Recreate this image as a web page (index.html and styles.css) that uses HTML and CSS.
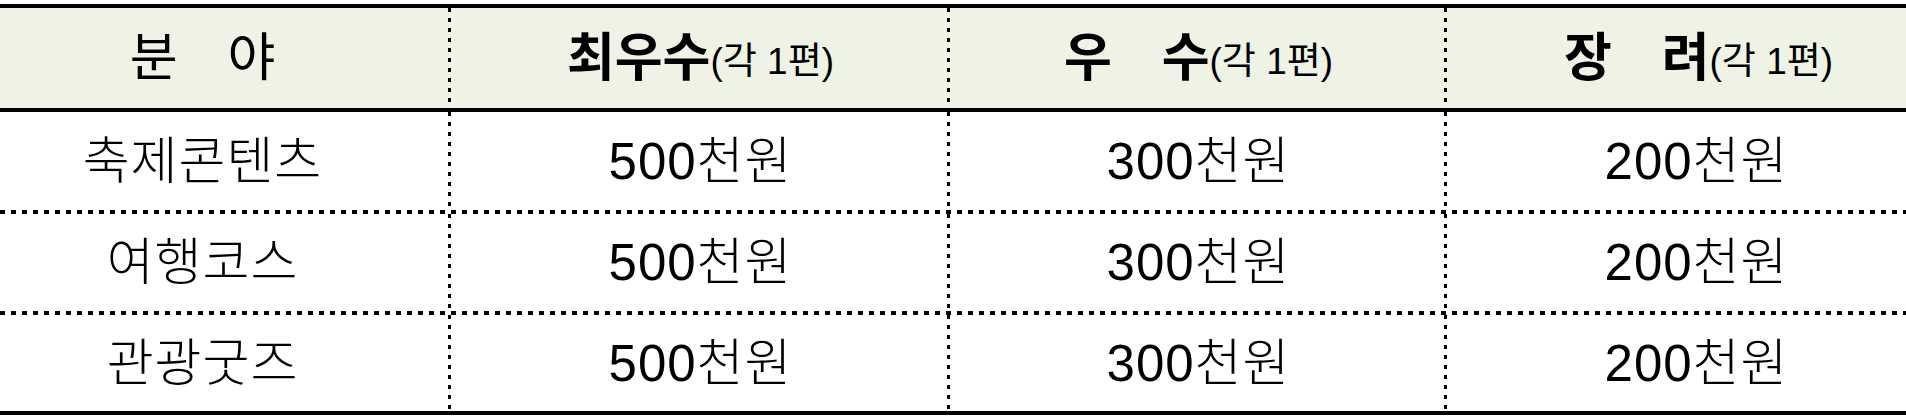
FILE: index.html
```html
<!DOCTYPE html>
<html lang="ko">
<head>
<meta charset="utf-8">
<link rel="stylesheet" href="styles.css">
</head>
<body>
<div class="table">
  <div class="cell head first vr"><span class="plain">분<span class="gap"></span>야</span></div>
  <div class="cell head vr"><b>최우수</b><span class="sub">(각 1편)</span></div>
  <div class="cell head vr"><b>우<span class="gap"></span>수</b><span class="sub">(각 1편)</span></div>
  <div class="cell head last"><b>장<span class="gap"></span>려</b><span class="sub">(각 1편)</span></div>

  <div class="cell r1 first vr">축제콘텐츠</div>
  <div class="cell r1 vr">500천원</div>
  <div class="cell r1 vr">300천원</div>
  <div class="cell r1 last">200천원</div>
  <div class="sep"></div>

  <div class="cell r2 first vr">여행코스</div>
  <div class="cell r2 vr">500천원</div>
  <div class="cell r2 vr">300천원</div>
  <div class="cell r2 last">200천원</div>
  <div class="sep"></div>

  <div class="cell r3 first vr">관광굿즈</div>
  <div class="cell r3 vr">500천원</div>
  <div class="cell r3 vr">300천원</div>
  <div class="cell r3 last">200천원</div>
</div>
</body>
</html>
```

FILE: styles.css
```css
html, body {
  margin: 0;
  padding: 0;
  background: #fff;
}

body {
  padding-top: 4px;
  font-family: "Liberation Sans", "Noto Sans CJK KR", sans-serif;
  color: #000;
}

.table {
  display: grid;
  grid-template-columns: 451px 499px 497px 1fr;
  border-top: 4px solid #000;
  border-bottom: 4px solid #000;
}

.cell {
  display: flex;
  align-items: center;
  justify-content: center;
  font-size: 51px;
  font-weight: 300;
  letter-spacing: 1px;
  line-height: 1;
  white-space: nowrap;
}

.first {
  padding-right: 46px;
}

.last {
  padding-left: 40px;
}

.head.last {
  padding-left: 44px;
}

.vr {
  background-image: linear-gradient(to bottom, #000 0, #000 4px, transparent 4px);
  background-size: 3px 10px;
  background-position: right top;
  background-repeat: repeat-y;
}

.head {
  height: 100px;
  background-color: #eef3e5;
  border-bottom: 4px solid #000;
  font-size: 52px;
  letter-spacing: 0;
}

.head b {
  font-weight: 700;
}

.head .plain {
  font-weight: 400;
}

.gap {
  display: inline-block;
  width: 0.96em;
}

.sub {
  font-size: 37px;
  font-weight: 400;
  margin-top: 6px;
}

.r1 { height: 98px; }
.r2 { height: 97px; }
.r3 { height: 96px; }

.sep {
  grid-column: 1 / -1;
  height: 4px;
  background-image: linear-gradient(to right, #000 0, #000 5px, transparent 5px);
  background-size: 11px 4px;
  background-repeat: repeat-x;
}
```
